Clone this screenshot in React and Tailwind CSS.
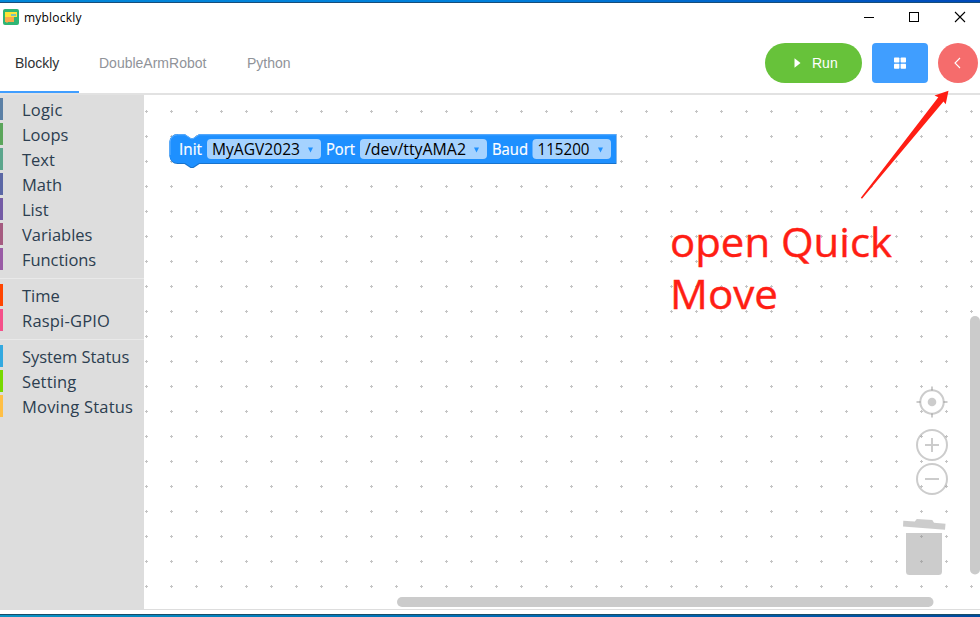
import React from "react";

const groups = [
  [
    ["Logic", "bg-[#5b80a5]", "tracking-[0.2px]"],
    ["Loops", "bg-[#5ba55b]", "tracking-normal"],
    ["Text", "bg-[#5ba58c]", "tracking-normal"],
    ["Math", "bg-[#5b67a5]", "tracking-normal"],
    ["List", "bg-[#745ba5]", "tracking-normal"],
    ["Variables", "bg-[#a55b80]", "tracking-normal"],
    ["Functions", "bg-[#995ba5]", "tracking-[-0.05px]"],
  ],
  [
    ["Time", "bg-[#ff4500]", "tracking-normal"],
    ["Raspi-GPIO", "bg-[#f5508a]", "tracking-[0.2px]"],
  ],
  [
    ["System Status", "bg-[#33a9e0]", "tracking-[-0.05px]"],
    ["Setting", "bg-[#77d900]", "tracking-[0.15px]"],
    ["Moving Status", "bg-[#ffbf45]", "tracking-[0.2px]"],
  ],
];

// Small plus marks, one every 25px
const gridPath = Array.from({ length: 34 * 20 }, (_, i) => {
  const x = 145 + (i % 34) * 25;
  const y = 110 + Math.floor(i / 34) * 25;
  return `M${x} ${y + 1}h3v1h-3zM${x + 1} ${y}h1v1h-1zM${x + 1} ${y + 2}h1v1h-1z`;
}).join("");

function TitleBar() {
  return (
    <div className="flex h-7 shrink-0 items-center justify-between pl-[3px]">
      <div className="flex items-center gap-[5px]">
        <svg width="16" height="16" viewBox="0 0 16 16">
          <rect width="16" height="16" rx="2" fill="#2fb574" />
          <path d="M2 3h12v5H11v0.500H2z" fill="#ffe436" />
          <path d="M2 8h9v5H5l-1 1-1-1H2z" fill="#f9a94a" />
          <rect x="8" y="5" width="5" height="2" fill="#7cc4b4" />
        </svg>
        <span className="pt-0.5 font-['Open_Sans','Noto_Sans',sans-serif] text-[12px] leading-4 tracking-[0.2px] text-black">
          myblockly
        </span>
      </div>
      <svg width="120" height="28" viewBox="860 3 120 28" fill="none" stroke="#000">
        <path d="M864 17.500h10M909.500 12.500h9v9h-9z" shapeRendering="crispEdges" />
        <path d="M955 12l10 10M965 12l-10 10" strokeWidth="1.100" />
      </svg>
    </div>
  );
}

function Header() {
  return (
    <div className="flex h-16 shrink-0 justify-between border-b-2 border-[#e2e2e2] font-['Liberation_Sans',Arial,sans-serif] text-[14px]">
      <div className="flex h-[62px] leading-[65px] text-[#909399]">
        <div className="w-[79px] border-b-2 border-[#409eff] pl-[15px] text-[#303133]">Blockly</div>
        <div className="w-[148px] pl-5">DoubleArmRobot</div>
        <div className="pl-5">Python</div>
      </div>
      <div className="flex gap-[10px] pt-3 pr-[2px] text-white">
        <button className="flex h-10 w-[97px] items-center rounded-full bg-[#67c23a] pl-[29px]">
          <svg width="7" height="10" viewBox="0 0 7 10">
            <path d="M0.500 0.300v9.400L6.500 5z" fill="#fff" />
          </svg>
          <span className="pl-[11px]">Run</span>
        </button>
        <button className="flex h-10 w-14 items-center justify-center rounded-[4px] bg-[#409eff]">
          <svg width="12" height="12" viewBox="0 0 12 12" fill="#fff">
            <rect y="0.500" width="5.400" height="5" rx="0.700" />
            <rect x="6.600" y="0.500" width="5.400" height="5" rx="0.700" />
            <rect y="6.700" width="5.400" height="5" rx="0.700" />
            <rect x="6.600" y="6.700" width="5.400" height="5" rx="0.700" />
          </svg>
        </button>
        <button className="flex h-10 w-10 items-center justify-center rounded-full bg-[#f56c6c]">
          <svg width="8" height="12" viewBox="0 0 8 12" fill="none" stroke="#fff" strokeWidth="1.100">
            <path d="M6 1L1 6l5 5" />
          </svg>
        </button>
      </div>
    </div>
  );
}

function Toolbox() {
  return (
    <div className="w-36 shrink-0 bg-[#ddd] pt-[3px] font-['Open_Sans','Noto_Sans',sans-serif] text-[16.5px] text-[#2c3e50]">
      {groups.map((items, g) => (
        <div key={g} className={g > 0 ? "mt-2 border-t border-[#e9e9e9] pt-[5px]" : ""}>
          {items.map(([name, color, tracking]) => (
            <div key={name} className="mb-[3px] flex h-[22px] items-center last:mb-0">
              <div className={`h-[22px] w-[3px] ${color}`} />
              <span className={`pt-0.5 pl-[19px] leading-[22px] whitespace-nowrap ${tracking}`}>{name}</span>
            </div>
          ))}
        </div>
      ))}
    </div>
  );
}

function Field({ x, w, text, textWidth }) {
  return (
    <g>
      <rect x={x} y="139" width={w} height="20" rx="4" fill="#a5d2ff" />
      <text x={x + 5} y="155" fill="#000" textLength={textWidth} lengthAdjust="spacingAndGlyphs">
        {text}
      </text>
      <path d={`M${x + w - 13} 147.500h5l-2.500 5z`} fill="#1e90ff" />
    </g>
  );
}

function Workspace() {
  return (
    <svg
      className="block h-[515px] w-[836px] shrink-0 border-b border-[#ddd]"
      viewBox="144 95 836 514"
      preserveAspectRatio="xMinYMin slice"
    >
      <path d={gridPath} fill="#c4c4c4" shapeRendering="crispEdges" />
      <g fontFamily="'Open Sans', 'Noto Sans', sans-serif" fontSize="15.500">
        <path
          d="M170 142a8 8 0 0 1 8-8h7l6 4h3l6-4h417v30H200l-6 4h-3l-6-4h-7a8 8 0 0 1-8-8z"
          transform="translate(-0.500 0)"
          fill="#1873cc"
        />
        <path
          d="M169.500 142a7.500 7.500 0 0 1 7.500-7.500h8l6 4h2l6-4h417v28.500H199l-6 4h-2l-6-4h-8a7.500 7.500 0 0 1-7.500-7.500z"
          fill="#1e90ff"
        />
        <path
          d="M170 155v-13a7.500 7.500 0 0 1 7.500-7.300h7.500l6 4h2l6-4h417"
          fill="none"
          stroke="#62b1ff"
          strokeWidth="1"
        />
        <g fill="#fff" stroke="#fff" strokeWidth="0.200">
          <text x="179" y="155" textLength="23" lengthAdjust="spacingAndGlyphs">Init</text>
          <text x="326" y="155" textLength="29" lengthAdjust="spacingAndGlyphs">Port</text>
          <text x="492" y="155" textLength="36" lengthAdjust="spacingAndGlyphs">Baud</text>
        </g>
        <Field x={207} w={114} text="MyAGV2023" textWidth={88} />
        <Field x={360} w={127} text="/dev/ttyAMA2" textWidth={101} />
        <Field x={532.5} w={78.5} text="115200" textWidth={52} />
      </g>
      <g fill="none" stroke="#888" strokeOpacity="0.430" strokeWidth="2">
        <circle cx="932" cy="402" r="11.700" />
        <path d="M932 386.500v4M932 413.500v4M916.500 402h4M943.500 402h4" />
        <circle cx="932" cy="402" r="4.300" fill="#888" fillOpacity="0.430" stroke="none" />
        <circle cx="932" cy="445" r="15" />
        <path d="M925 445h14M932 438v14" />
        <circle cx="932" cy="479" r="15" />
        <path d="M925 479h14" />
      </g>
      <g fill="#888" fillOpacity="0.430">
        <path d="M903.300 520.800l11.500 0.800 2-2.500 15.500 1 1.700 2.700 11.500 1-0.500 6-42-3.300z" />
        <path d="M906 533h36v38.500a3.500 3.500 0 0 1-3.500 3.500h-29a3.500 3.500 0 0 1-3.500-3.500z" />
      </g>
      <rect x="970" y="316" width="10" height="258.500" rx="5" fill="#cbcbcb" />
      <rect x="397" y="597" width="536.500" height="10" rx="5" fill="#cbcbcb" />
      <g
        fill="#ff1e14"
        stroke="#ff1e14"
        strokeWidth="0.400"
        fontFamily="'Open Sans', 'Noto Sans', sans-serif"
        fontSize="41"
      >
        <text x="670" y="257" textLength="222" lengthAdjust="spacingAndGlyphs">open Quick</text>
        <text x="670" y="309" textLength="108" lengthAdjust="spacingAndGlyphs">Move</text>
      </g>
    </svg>
  );
}

export default function App() {
  return (
    <div className="relative flex h-[617px] w-[980px] flex-col overflow-hidden bg-white">
      <div className="h-[3px] shrink-0 border-b border-[#174d7a] bg-linear-to-r from-[#0287d8] via-[#0080dc] to-[#0048b8]" />
      <TitleBar />
      <Header />
      <div className="flex h-[515px] shrink-0">
        <Toolbox />
        <Workspace />
      </div>
      <div className="mt-1 h-[3px] shrink-0 border-t border-[#174d6a] bg-linear-to-r from-[#0a93c4] via-[#006cb4] to-[#004a9c]" />
      <svg className="absolute top-[85px] left-[855px]" width="100" height="120" viewBox="855 85 100 120">
        <path d="M860.800 197.800L938.300 97.300L934.500 95.500L948.500 90.700L945.700 104.200L943.500 101.500L862 198.800z" fill="#ff1e14" />
      </svg>
    </div>
  );
}
